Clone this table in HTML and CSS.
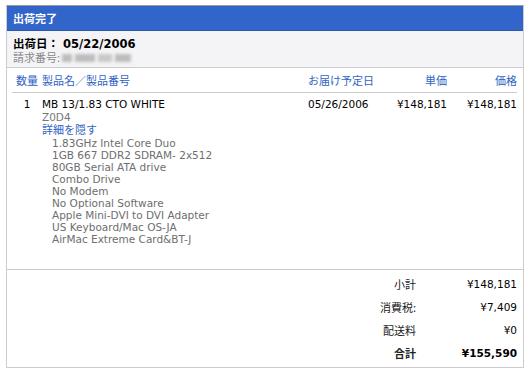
FILE: index.html
```html
<!DOCTYPE html>
<html lang="ja">
<head>
<meta charset="utf-8">
<link rel="stylesheet" href="styles.css">
</head>
<body>
<div class="order">
  <div class="order-title">出荷完了</div>
  <div class="order-meta">
    <div class="ship-date">出荷日： 05/22/2006</div>
    <div class="invoice">請求番号: <span class="blur"><span class="b1"></span><span class="b2"></span><span class="b3"></span><span class="b4"></span></span></div>
  </div>
  <div class="items">
    <div class="grid head">
      <div class="c-qty">数量</div>
      <div class="c-name">製品名／製品番号</div>
      <div class="c-date">お届け予定日</div>
      <div class="c-unit">単価</div>
      <div class="c-price">価格</div>
    </div>
    <div class="grid row">
      <div class="c-qty num">1</div>
      <div class="c-name">
        <div class="pname">MB 13/1.83 CTO WHITE</div>
        <div class="pcode">Z0D4</div>
        <div class="toggle">詳細を隠す</div>
        <ul class="specs">
          <li>1.83GHz Intel Core Duo</li>
          <li>1GB 667 DDR2 SDRAM- 2x512</li>
          <li>80GB Serial ATA drive</li>
          <li>Combo Drive</li>
          <li>No Modem</li>
          <li>No Optional Software</li>
          <li>Apple Mini-DVI to DVI Adapter</li>
          <li>US Keyboard/Mac OS-JA</li>
          <li>AirMac Extreme Card&amp;BT-J</li>
        </ul>
      </div>
      <div class="c-date num">05/26/2006</div>
      <div class="c-unit num">¥148,181</div>
      <div class="c-price num">¥148,181</div>
    </div>
  </div>
  <div class="summary">
    <div class="s-label">小計</div><div class="s-val">¥148,181</div>
    <div class="s-label">消費税:</div><div class="s-val">¥7,409</div>
    <div class="s-label">配送料</div><div class="s-val">¥0</div>
    <div class="s-label total">合計</div><div class="s-val total">¥155,590</div>
  </div>
</div>
</body>
</html>
```
FILE: styles.css
```css
html, body {
  margin: 0;
  padding: 0;
  background: #ffffff;
}
body {
  font-family: "DejaVu Sans", "Noto Sans CJK JP", sans-serif;
  font-size: 11px;
  color: #000;
}
.order {
  margin: 5px 6px 0 6px;
  width: 516px;
  border: 1px solid #cccccc;
  border-top-color: #9a9a9a;
}
.order-title {
  background: #3265c9;
  color: #fff;
  font-family: "Noto Sans CJK JP", sans-serif;
  font-weight: bold;
  font-size: 11px;
  height: 24px;
  line-height: 24px;
  padding-left: 6px;
  border-bottom: 1px solid #2a56ad;
}
.order-meta {
  background: #f4f4f6;
  height: 37px;
  padding: 6px 0 0 6px;
  box-sizing: border-box;
  border-bottom: 1px solid #cccccc;
}
.ship-date {
  font-family: "DejaVu Sans", "Noto Sans CJK JP", sans-serif;
  font-weight: bold;
  font-size: 11.5px;
  line-height: 14px;
}
.invoice {
  color: #8a8a8a;
  font-family: "Noto Sans CJK JP", sans-serif;
  font-size: 11px;
  line-height: 13px;
  display: flex;
  align-items: center;
}
.blur {
  display: inline-flex;
  gap: 3px;
  margin-left: 2px;
  filter: blur(1.4px);
}
.blur span {
  display: inline-block;
  height: 8px;
  background: #bdbdbd;
}
.b1 { width: 10px; }
.b2 { width: 20px; }
.b3 { width: 14px; background: #c9c9c9 !important; }
.b4 { width: 16px; }
.items {
  height: 201px;
  border-bottom: 1px solid #cccccc;
}
.grid {
  display: grid;
  grid-template-columns: 30px 1fr 72px 67px 70px;
  margin: 0 6px 0 5px;
}
.head {
  height: 24px;
  align-items: center;
  color: #3163c4;
  font-family: "Noto Sans CJK JP", sans-serif;
  font-size: 11px;
  border-bottom: 1px solid #cccccc;
}
.row {
  padding-top: 5px;
  line-height: 12.5px;
}
.c-qty { text-align: center; }
.c-unit, .c-price { text-align: right; }
.num { font-family: "DejaVu Sans", sans-serif; font-size: 10.5px; }
.pname { font-size: 10.5px; }
.pcode { color: #777; font-size: 10.5px; }
.toggle {
  color: #3163c4;
  font-family: "Noto Sans CJK JP", sans-serif;
  font-size: 11px;
}
.specs {
  list-style: none;
  margin: 1px 0 0 10px;
  padding: 0;
  color: #6e6e6e;
  font-size: 10.5px;
  line-height: 12px;
}
.summary {
  display: grid;
  grid-template-columns: auto 101px;
  justify-content: end;
  grid-auto-rows: 23px;
  align-items: center;
  padding: 2px 6px 3px 0;
  font-size: 10.5px;
}
.s-label {
  text-align: right;
  font-family: "Noto Sans CJK JP", sans-serif;
  font-size: 11px;
  color: #222;
}
.s-val {
  text-align: right;
  color: #000;
}
.total { font-weight: bold; }
```
